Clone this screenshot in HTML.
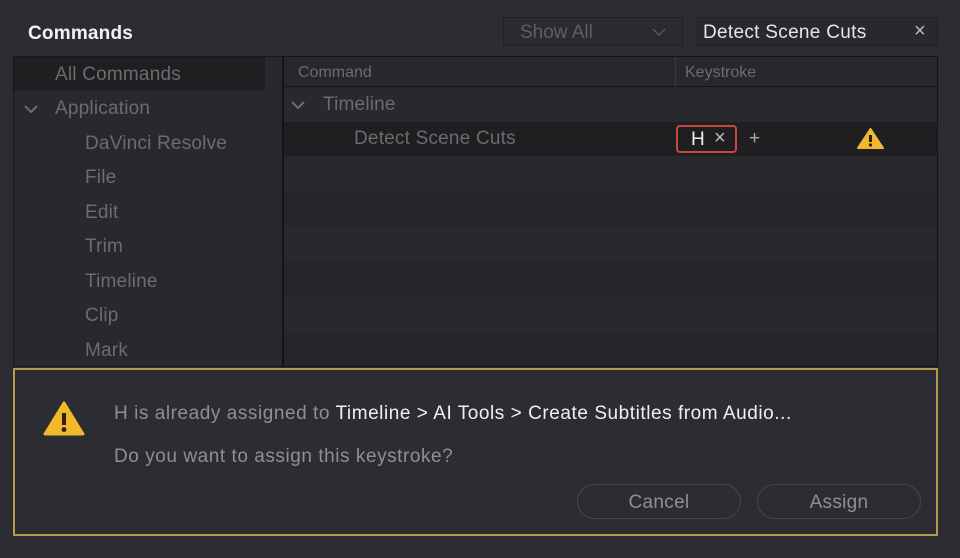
<!DOCTYPE html>
<html><head><style>
*{margin:0;padding:0;box-sizing:border-box}
body{width:960px;height:558px;background:#2c2d32;font-family:"Liberation Sans",sans-serif;position:relative;overflow:hidden}
.a{position:absolute;white-space:nowrap}
.lt{color:#6c6c70;font-size:19px;letter-spacing:0.2px}
</style></head><body>
<div class="a" style="left:28px;top:23px;color:#f2f2f2;font-size:19px;font-weight:bold;letter-spacing:0.2px">Commands</div>
<div class="a" style="left:503px;top:17px;width:180px;height:29px;border:1px solid #202124;background:#2a2b2f"></div>
<div class="a" style="left:520px;top:22px;color:#5e5f63;font-size:19px">Show All</div>
<svg class="a" style="left:652px;top:27px" width="14" height="10"><path d="M1 2l6 6 6-6" fill="none" stroke="#55565a" stroke-width="1.5"/></svg>
<div class="a" style="left:697px;top:17px;width:241px;height:29px;border:1px solid #202124;background:#28292d"></div>
<div class="a" style="left:703px;top:22px;color:#e6e6e6;font-size:19px;letter-spacing:0.3px">Detect Scene Cuts</div>
<div class="a" style="left:914px;top:20px;color:#bbb;font-size:20px">×</div>

<div class="a" style="left:13px;top:56px;width:269px;height:311px;background:#28292d;border:1px solid #18181a;border-right:none"></div>
<div class="a" style="left:14px;top:57px;width:251px;height:34px;background:#1f1f22"></div>
<div class="a lt" style="left:55px;top:64px">All Commands</div>
<svg class="a" style="left:24px;top:104px" width="14" height="10"><path d="M1 2l6 6 6-6" fill="none" stroke="#6c6c70" stroke-width="2"/></svg>
<div class="a lt" style="left:55px;top:98px">Application</div>
<div class="a lt" style="left:85px;top:133px">DaVinci Resolve</div>
<div class="a lt" style="left:85px;top:167px">File</div>
<div class="a lt" style="left:85px;top:202px">Edit</div>
<div class="a lt" style="left:85px;top:236px">Trim</div>
<div class="a lt" style="left:85px;top:271px">Timeline</div>
<div class="a lt" style="left:85px;top:305px">Clip</div>
<div class="a lt" style="left:85px;top:340px">Mark</div>

<div class="a" style="left:282px;top:56px;width:656px;height:311px;background:#28282d;border:1px solid #141416;border-left:2px solid #141416"></div>
<div class="a" style="left:284px;top:57px;width:653px;height:30px;background:#27282c;border-bottom:1px solid #151517"></div>
<div class="a" style="left:675px;top:58px;width:1px;height:28px;background:#3a3b3f"></div>
<div class="a" style="left:298px;top:64px;color:#6c6c70;font-size:16px">Command</div>
<div class="a" style="left:685px;top:64px;color:#6c6c70;font-size:16px">Keystroke</div>
<svg class="a" style="left:291px;top:100px" width="14" height="10"><path d="M1 2l6 6 6-6" fill="none" stroke="#6c6c70" stroke-width="2"/></svg>
<div class="a lt" style="left:323px;top:94px">Timeline</div>
<div class="a" style="left:284px;top:122px;width:653px;height:34px;background:#1f1f22"></div>
<div class="a lt" style="left:354px;top:128px">Detect Scene Cuts</div>
<div class="a" style="left:676px;top:125px;width:61px;height:28px;border:2px solid #c44a40;border-radius:4px"></div>
<div class="a" style="left:691px;top:129px;color:#f0f0f0;font-size:19px">H</div>
<div class="a" style="left:714px;top:127px;color:#bbb;font-size:20px">×</div>
<div class="a" style="left:749px;top:128px;color:#aaa;font-size:19px">+</div>
<svg class="a" style="left:857px;top:127px" width="27" height="23"><path d="M13.5 2L26 21H1Z" fill="#f2b82d" stroke="#f2b82d" stroke-width="2" stroke-linejoin="round"/><rect x="12" y="8" width="3" height="7" fill="#2a2206"/><circle cx="13.5" cy="18" r="1.6" fill="#2a2206"/></svg>
<div class="a" style="left:284px;top:191px;width:653px;height:35px;background:#26262a"></div>
<div class="a" style="left:284px;top:261px;width:653px;height:35px;background:#26262a"></div>
<div class="a" style="left:284px;top:331px;width:653px;height:35px;background:#26262a"></div>

<div class="a" style="left:13px;top:368px;width:925px;height:168px;border:2px solid #b89a4c;background:#2c2d32"></div>
<svg class="a" style="left:43px;top:401px" width="42" height="36"><path d="M21 2L40 33H2Z" fill="#f2b82d" stroke="#f2b82d" stroke-width="3" stroke-linejoin="round"/><rect x="19" y="12" width="4" height="12" fill="#2a2206"/><circle cx="21" cy="28.5" r="2.4" fill="#2a2206"/></svg>
<div class="a" style="left:114px;top:403px;font-size:19px;color:#8f8f93;letter-spacing:0.55px">H is already assigned to <span style="color:#f0f0f0">Timeline &gt; AI Tools &gt; Create Subtitles from Audio...</span></div>
<div class="a" style="left:114px;top:446px;font-size:19px;color:#8f8f93;letter-spacing:0.55px">Do you want to assign this keystroke?</div>
<div class="a" style="left:577px;top:484px;width:164px;height:35px;border:1px solid #45464b;border-radius:18px;color:#8f8f93;font-size:19px;text-align:center;line-height:35px;letter-spacing:0.3px">Cancel</div>
<div class="a" style="left:757px;top:484px;width:164px;height:35px;border:1px solid #45464b;border-radius:18px;color:#8f8f93;font-size:19px;text-align:center;line-height:35px;letter-spacing:0.3px">Assign</div>
</body></html>
